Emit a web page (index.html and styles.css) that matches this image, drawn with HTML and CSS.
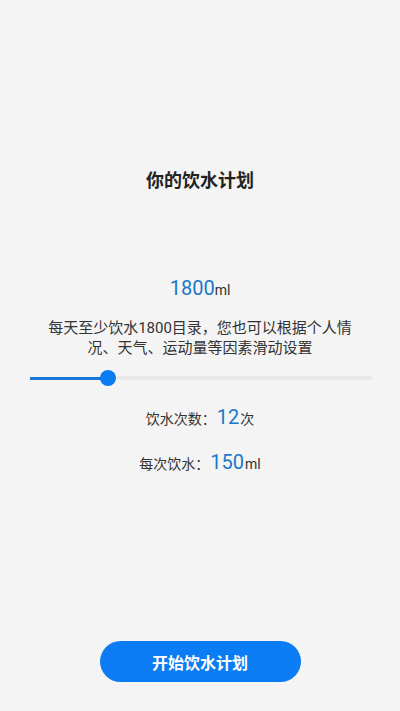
FILE: index.html
```html
<!DOCTYPE html>
<html lang="zh-CN">
<head>
<meta charset="UTF-8" />
<meta name="viewport" content="width=device-width, initial-scale=1" />
<title>饮水计划</title>
<link rel="stylesheet" href="styles.css">
</head>
<body>
  <div class="page">
    <h1 class="title">你的饮水计划</h1>

    <div class="amount"><span class="num">1800</span><span class="unit">ml</span></div>

    <p class="desc">每天至少饮水1800目录，您也可以根据个人情况、天气、运动量等因素滑动设置</p>

    <div class="slider" role="slider" aria-valuemin="0" aria-valuemax="4000" aria-valuenow="1800">
      <div class="slider-fill"></div>
      <div class="slider-thumb"></div>
      <div class="slider-rest"></div>
    </div>

    <div class="stat">饮水次数：<span class="num">12</span>次</div>
    <div class="stat">每次饮水：<span class="num">150</span><span class="unit">ml</span></div>

    <button class="start-btn">开始饮水计划</button>
  </div>
</body>
</html>
```

FILE: styles.css
```css
* {
  box-sizing: border-box;
}
body {
  margin: 0;
  background: #f4f4f4;
  font-family: Roboto, "Noto Sans CJK SC", sans-serif;
  color: #333;
}

.page {
  height: 711px;
  display: flex;
  flex-direction: column;
  align-items: center;
  padding: 169px 0 29px;
}

.title {
  margin: 0;
  font-size: 18px;
  line-height: 24px;
  font-weight: 700;
  color: #222;
}

.amount {
  margin-top: 81px;
  line-height: 28px;
}
.num {
  font-size: 20px;
  color: #1a78c9;
}
.unit {
  font-size: 14px;
  color: #333;
}

.desc {
  margin: 14px 0 0;
  width: 304px;
  font-size: 15px;
  line-height: 20px;
  text-align: center;
  color: #333;
}

/* drag bar for the daily amount */
.slider {
  margin-top: 10px;
  align-self: stretch;
  margin-left: 30px;
  margin-right: 28px;
  height: 20px;
  display: flex;
  align-items: center;
}
.slider-fill {
  width: 78px;
  height: 3px;
  background: #1677d6;
}
.slider-thumb {
  width: 16px;
  height: 16px;
  margin: 0 -8px;
  border-radius: 50%;
  background: #0a7cf2;
  position: relative;
  z-index: 1;
}
.slider-rest {
  flex: 1;
  height: 4px;
  background: #e9e9e9;
  border-radius: 2px;
}

.stat {
  margin-top: 15px;
  font-size: 14px;
  line-height: 28px;
  color: #333;
}
.stat .num {
  margin: 0 1px;
}

.start-btn {
  margin-top: auto;
  width: 201px;
  height: 41px;
  border: none;
  border-radius: 21px;
  background: #0b7cf3;
  color: #fff;
  font-family: "Noto Sans CJK SC", sans-serif;
  font-size: 16px;
  font-weight: 700;
  cursor: pointer;
}
```
